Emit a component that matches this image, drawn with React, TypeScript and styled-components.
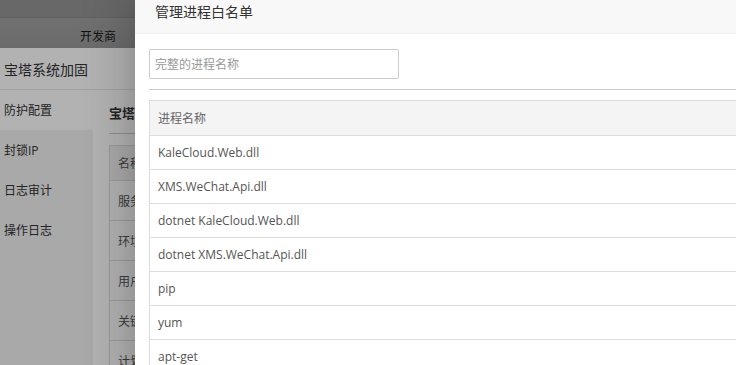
import React from "react";
import styled, { createGlobalStyle } from "styled-components";

const FONT = `"Open Sans", "Noto Sans CJK SC", sans-serif`;

const GlobalStyle = createGlobalStyle`
  html, body { margin: 0; padding: 0; background: #fff; }
  body { font-family: ${FONT}; overflow: hidden; }
  * { box-sizing: border-box; }
`;

const Page = styled.div`
  position: relative;
  width: 736px;
  height: 365px;
  overflow: hidden;
  display: flex;
  flex-direction: column;
  background: #fff;
`;

const TopStrip = styled.div`
  flex-shrink: 0;
  height: 18px;
  background: #969696;
  border-bottom: 1px solid #8c8c8c;
`;

const TabBar = styled.div`
  flex-shrink: 0;
  height: 30px;
  background: linear-gradient(to bottom, #a2a2a2, #9a9a9a);
  display: flex;
  align-items: center;
  padding: 5px 0 0 80px;
  font-size: 12px;
  color: #1a1a1a;
`;

const PluginHeader = styled.div`
  flex-shrink: 0;
  height: 42px;
  border-bottom: 1px solid #e6e6e6;
  display: flex;
  align-items: center;
  padding-left: 4px;
  font-size: 14px;
  color: #333;
`;

const Body = styled.div`
  flex: 1;
  min-height: 0;
  display: flex;
`;

const Nav = styled.div`
  flex-shrink: 0;
  width: 93px;
  background: #f2f2f2;
  display: flex;
  flex-direction: column;
`;

const NavItem = styled.div<{ $active?: boolean }>`
  flex-shrink: 0;
  height: 40px;
  display: flex;
  align-items: center;
  padding-left: 4px;
  font-size: 12px;
  color: #333;
  background: ${(p) => (p.$active ? "#fff" : "transparent")};
`;

const Main = styled.div`
  flex: 1;
  min-width: 0;
  padding: 13px 0 0 16px;
  display: flex;
  flex-direction: column;
`;

const MainTitle = styled.div`
  flex-shrink: 0;
  font-size: 13px;
  font-weight: bold;
  color: #333;
  height: 31px;
  line-height: 20px;
  border-bottom: 1px solid #ccc;
  margin-bottom: 11px;
`;

const BgTable = styled.div`
  flex-shrink: 0;
  border: 1px solid #ddd;
  border-right: none;
  display: flex;
  flex-direction: column;
`;

const BgRow = styled.div<{ $head?: boolean }>`
  flex-shrink: 0;
  height: ${(p) => (p.$head ? 34 : 40)}px;
  display: flex;
  align-items: center;
  padding-left: 8px;
  font-size: 12px;
  color: #555;
  background: ${(p) => (p.$head ? "#f2f2f2" : "#fff")};
  border-top: 1px solid #ddd;
  &:first-child { border-top: none; }
  white-space: nowrap;
`;

const Shade = styled.div`
  position: absolute;
  inset: 0;
  background: rgba(0, 0, 0, 0.3);
`;

const Layer = styled.div`
  position: absolute;
  left: 135px;
  top: -9px;
  width: 720px;
  height: 420px;
  background: #fff;
  box-shadow: 1px 1px 50px rgba(0, 0, 0, 0.3);
  display: flex;
  flex-direction: column;
`;

const LayerTitle = styled.div`
  flex-shrink: 0;
  height: 43px;
  line-height: 42px;
  padding-left: 20px;
  background: #f8f8f8;
  border-bottom: 1px solid #eee;
  font-size: 14px;
  color: #333;
`;

const LayerContent = styled.div`
  padding: 15px 0 0 14px;
  display: flex;
  flex-direction: column;
`;

const Input = styled.input`
  flex-shrink: 0;
  width: 250px;
  height: 30px;
  border: 1px solid #ccc;
  border-radius: 2px;
  padding: 0 5px;
  font-family: ${FONT};
  font-size: 12px;
  color: #555;
  outline: none;
  &::placeholder { color: #999; }
`;

const Divider = styled.div`
  flex-shrink: 0;
  height: 1px;
  background: #ccc;
  margin: 10px 0 10px;
`;

const Table = styled.div`
  flex-shrink: 0;
  border: 1px solid #ddd;
  border-right: none;
  display: flex;
  flex-direction: column;
`;

const Row = styled.div<{ $head?: boolean }>`
  flex-shrink: 0;
  height: 34px;
  display: flex;
  align-items: center;
  padding-left: 8px;
  font-size: 12px;
  color: ${(p) => (p.$head ? "#666" : "#555")};
  background: ${(p) => (p.$head ? "#f4f4f4" : "#fff")};
  border-top: 1px solid #ddd;
  &:first-child { border-top: none; }
`;

const processes = [
  "KaleCloud.Web.dll",
  "XMS.WeChat.Api.dll",
  "dotnet KaleCloud.Web.dll",
  "dotnet XMS.WeChat.Api.dll",
  "pip",
  "yum",
  "apt-get",
];

const bgRows = ["服务加固", "环境变量", "用户加固", "关键目录", "计划任务"];

export default function App() {
  return (
    <>
      <GlobalStyle />
      <Page>
        <TopStrip />
        <TabBar>开发商</TabBar>
        <PluginHeader>宝塔系统加固</PluginHeader>
        <Body>
          <Nav>
            <NavItem $active>防护配置</NavItem>
            <NavItem>封锁IP</NavItem>
            <NavItem>日志审计</NavItem>
            <NavItem>操作日志</NavItem>
          </Nav>
          <Main>
            <MainTitle>宝塔系统加固</MainTitle>
            <BgTable>
              <BgRow $head>名称</BgRow>
              {bgRows.map((r) => (
                <BgRow key={r}>{r}</BgRow>
              ))}
            </BgTable>
          </Main>
        </Body>
        <Shade />
        <Layer>
          <LayerTitle>管理进程白名单</LayerTitle>
          <LayerContent>
            <Input placeholder="完整的进程名称" />
            <Divider />
            <Table>
              <Row $head>进程名称</Row>
              {processes.map((p) => (
                <Row key={p}>{p}</Row>
              ))}
            </Table>
          </LayerContent>
        </Layer>
      </Page>
    </>
  );
}
